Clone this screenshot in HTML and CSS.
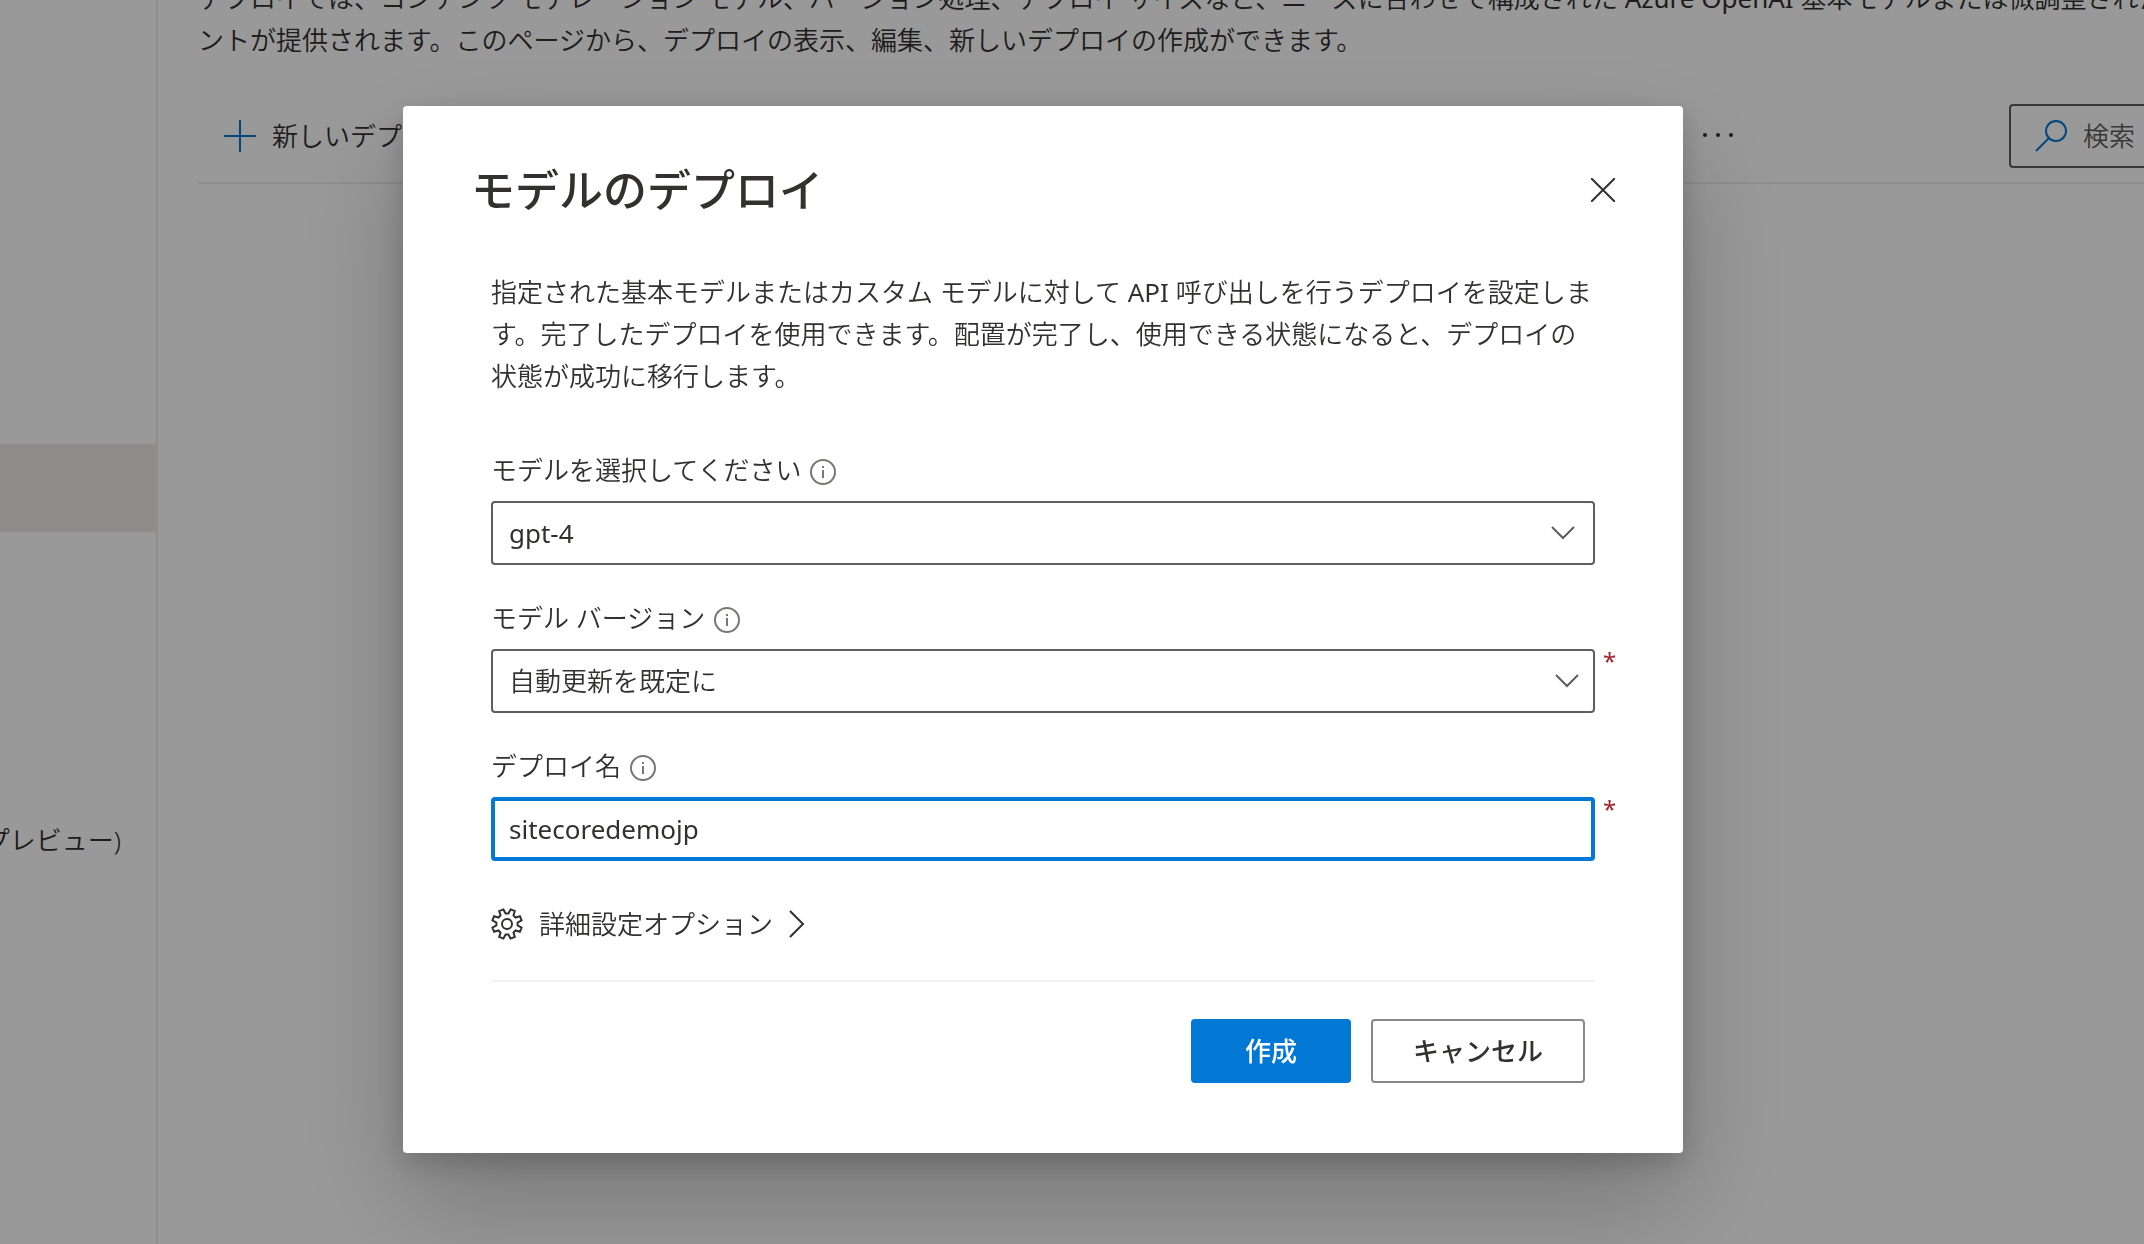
FILE: index.html
```html
<!DOCTYPE html>
<html lang="ja">
<head>
<meta charset="utf-8">
<title>モデルのデプロイ</title>
<link rel="stylesheet" href="styles.css">
</head>
<body>
<div class="app">
  <nav class="sidebar">
    <a class="nav-item nav-item-selected" href="#" aria-label="デプロイ"></a>
    <a class="nav-item nav-item-preview" href="#">(プレビュー)</a>
  </nav>
  <main class="content">
    <p class="intro">デプロイでは、コンテンツ モデレーション モデル、バージョン処理、デプロイ サイズなど、ニーズに合わせて構成された <span class="latin">Azure OpenAI </span>基本モデルまたは微調整された<br>ントが提供されます。このページから、デプロイの表示、編集、新しいデプロイの作成ができます。</p>
    <div class="toolbar">
      <button class="command" type="button">
        <svg class="icon-32 accent" viewBox="0 0 32 32" aria-hidden="true"><path d="M16 0V32M0 16H32" stroke-width="2"/></svg>
        <span>新しいデプ</span>
      </button>
      <button class="command more" type="button" aria-label="その他">
        <svg class="icon-32" viewBox="0 0 32 32" aria-hidden="true"><g class="dots"><circle cx="3" cy="15" r="2"/><circle cx="16" cy="15" r="2"/><circle cx="29" cy="15" r="2"/></g></svg>
      </button>
      <div class="search">
        <svg class="icon-32 accent" viewBox="0 0 32 32" aria-hidden="true"><circle cx="21" cy="11" r="10" stroke-width="2"/><path d="M14 18L1 31" stroke-width="2"/></svg>
        <input class="search-input" type="text" placeholder="検索" aria-label="検索">
      </div>
    </div>
  </main>
</div>

<div class="overlay">
  <section class="dialog" role="dialog" aria-modal="true" aria-labelledby="dialog-title">
    <header class="dialog-header">
      <h1 class="dialog-title" id="dialog-title">モデルのデプロイ</h1>
      <button class="close" type="button" aria-label="閉じる">
        <svg class="icon-24" viewBox="0 0 24 24" aria-hidden="true"><path d="M0 0L24 24M24 0L0 24" stroke-width="2"/></svg>
      </button>
    </header>
    <form class="dialog-body">
      <p class="description">指定された基本モデルまたはカスタム モデルに対して <span class="latin">API </span>呼び出しを行うデプロイを設定します。完了したデプロイを使用できます。配置が完了し、使用できる状態になると、デプロイの状態が成功に移行します。</p>

      <div class="field">
        <div class="label-row">
          <label for="model">モデルを選択してください</label>
          <svg class="info" viewBox="0 0 26 26" aria-hidden="true"><circle cx="13" cy="13" r="12"/><path d="M13 11V19M13 7V9"/></svg>
        </div>
        <div class="control">
          <select class="box" id="model"><option>gpt-4</option></select>
          <svg class="chevron chevron-inset" viewBox="0 0 24 14" aria-hidden="true"><path d="M1 1L12 12L23 1"/></svg>
        </div>
      </div>

      <div class="field">
        <div class="label-row">
          <label for="version">モデル バージョン</label>
          <svg class="info" viewBox="0 0 26 26" aria-hidden="true"><circle cx="13" cy="13" r="12"/><path d="M13 11V19M13 7V9"/></svg>
        </div>
        <div class="control">
          <select class="box box-japanese" id="version" required><option>自動更新を既定に</option></select>
          <svg class="chevron" viewBox="0 0 24 14" aria-hidden="true"><path d="M1 1L12 12L23 1"/></svg>
          <span class="required" aria-hidden="true">*</span>
        </div>
      </div>

      <div class="field">
        <div class="label-row">
          <label for="name">デプロイ名</label>
          <svg class="info" viewBox="0 0 26 26" aria-hidden="true"><circle cx="13" cy="13" r="12"/><path d="M13 11V19M13 7V9"/></svg>
        </div>
        <div class="control">
          <input class="box box-active" id="name" type="text" value="sitecoredemojp" required>
          <span class="required" aria-hidden="true">*</span>
        </div>
      </div>

      <button class="advanced" type="button">
        <svg class="icon-32" viewBox="0 0 32 32" aria-hidden="true"><circle cx="16" cy="16" r="5" stroke-width="2"/><path stroke-width="2" stroke-linejoin="miter" d="M19.600 1.400L23.800 3.100L22.500 7.500L24.500 9.500L28.900 8.200L30.600 12.400L26.600 14.600V17.400L30.600 19.600L28.900 23.800L24.500 22.500L22.500 24.500L23.800 28.900L19.600 30.600L17.400 26.600H14.600L12.400 30.600L8.200 28.900L9.500 24.500L7.500 22.500L3.100 23.800L1.400 19.600L5.400 17.400V14.600L1.400 12.400L3.100 8.200L7.500 9.500L9.500 7.500L8.200 3.100L12.400 1.400L14.600 5.400H17.400Z"/></svg>
        <span>詳細設定オプション</span>
        <svg class="arrow" viewBox="0 0 16 28" aria-hidden="true"><path d="M1 1L14 14L1 27" stroke-width="2"/></svg>
      </button>

      <div class="actions">
        <button class="button button-primary" type="submit">作成</button>
        <button class="button" type="button">キャンセル</button>
      </div>
    </form>
  </section>
</div>
</body>
</html>
```
FILE: styles.css
```css
* {
  box-sizing: border-box;
}

body {
  margin: 0;
  color: #323130;
  background: #fff;
  font: 350 26px/42px "Noto Sans", "Noto Sans CJK JP", sans-serif;
}

button,
input,
select {
  font: inherit;
  color: inherit;
}

button {
  padding: 0;
  border: 0;
  background: none;
}

svg {
  display: block;
  flex: none;
  fill: none;
  stroke: currentColor;
}

/* Latin letters need a heavier weight to look even beside the kana */
.latin {
  font-weight: 400;
}

.icon-24 {
  width: 24px;
  height: 24px;
}

.icon-32 {
  width: 32px;
  height: 32px;
}

.accent {
  color: #0078d4;
}

/* Page behind the dialog */

.app {
  display: flex;
  height: 100vh;
  overflow: hidden;
}

.sidebar {
  flex: none;
  width: 158px;
  padding-top: 444px;
  border-right: 2px solid #eee;
  overflow: hidden;
}

.nav-item {
  display: flex;
  align-items: center;
  justify-content: flex-end;
  height: 88px;
  padding-right: 35px;
  color: inherit;
  text-decoration: none;
  white-space: nowrap;
}

.nav-item-selected {
  background: #edebe9;
}

.nav-item-preview {
  margin-top: 264px;
}

.content {
  flex: 1;
  min-width: 0;
  padding-left: 40px;
  overflow: hidden;
}

/* The page is scrolled so that the first line is cut by the window edge */
.intro {
  margin: -23px 0 0;
  white-space: nowrap;
}

.toolbar {
  display: flex;
  align-items: center;
  margin-top: 43px;
  padding: 0 0 14px 26px;
  border-bottom: 2px solid #eee;
}

.command {
  display: flex;
  align-items: center;
  gap: 16px;
}

.more {
  margin-left: auto;
  margin-right: 275px;
}

.dots {
  fill: currentColor;
  stroke: none;
}

.search {
  display: flex;
  flex: none;
  align-items: center;
  gap: 16px;
  width: 135px;
  height: 64px;
  padding-left: 24px;
  border: 2px solid #605e5c;
  border-right: 0;
  border-radius: 4px 0 0 4px;
}

.search-input {
  flex: 1;
  min-width: 0;
  padding: 0;
  border: 0;
  background: none;
}

.search-input::placeholder {
  color: #605e5c;
}

/* Dialog */

.overlay {
  position: fixed;
  inset: 0;
  display: flex;
  align-items: center;
  justify-content: center;
  padding: 14px 58px 0 0;
  background: rgba(0, 0, 0, 0.4);
}

.dialog {
  width: 100%;
  max-width: 1280px;
  border-radius: 4px;
  background: #fff;
  box-shadow: 0 51px 115px rgba(0, 0, 0, 0.22), 0 10px 29px rgba(0, 0, 0, 0.18);
}

.dialog-header {
  display: flex;
  align-items: center;
  justify-content: space-between;
  padding: 54px 68px 0;
}

.dialog-title {
  margin: 0;
  font-size: 44px;
  font-weight: 500;
  line-height: 60px;
}

.dialog-body {
  padding: 51px 88px 70px;
}

.description {
  margin: 0 0 52px;
}

.field {
  margin-bottom: 32px;
}

.label-row {
  display: flex;
  align-items: center;
  gap: 9px;
  margin-bottom: 10px;
}

.info {
  width: 26px;
  height: 26px;
  margin-top: 4px;
  color: #797775;
  stroke-width: 2;
}

.control {
  position: relative;
}

.box {
  display: block;
  width: 100%;
  height: 64px;
  padding: 0 16px;
  border: 2px solid #605e5c;
  border-radius: 4px;
  background: #fff;
  font-weight: 400;
  appearance: none;
}

.box-japanese {
  font-weight: 350;
}

.box-active {
  padding: 0 14px;
  border: 4px solid #0078d4;
  outline: 0;
}

.chevron {
  position: absolute;
  top: 25px;
  right: 16px;
  width: 24px;
  height: 14px;
  color: #605e5c;
  stroke-width: 2;
  pointer-events: none;
}

.chevron-inset {
  right: 20px;
}

.required {
  position: absolute;
  top: -4px;
  left: calc(100% + 8px);
  color: #a4262c;
  font-size: 24px;
  font-weight: 400;
  line-height: 32px;
}

.advanced {
  display: flex;
  align-items: center;
  gap: 16px;
  margin-top: 42px;
}

.arrow {
  width: 16px;
  height: 28px;
}

.actions {
  display: flex;
  justify-content: flex-end;
  gap: 20px;
  margin-top: 35px;
  padding: 37px 10px 0 0;
  border-top: 2px solid #f3f2f1;
}

.button {
  min-width: 160px;
  height: 64px;
  padding: 0 40px;
  border: 2px solid #8a8886;
  border-radius: 4px;
  font-weight: 500;
}

.button-primary {
  border-color: #0078d4;
  background: #0078d4;
  color: #fff;
}
```
